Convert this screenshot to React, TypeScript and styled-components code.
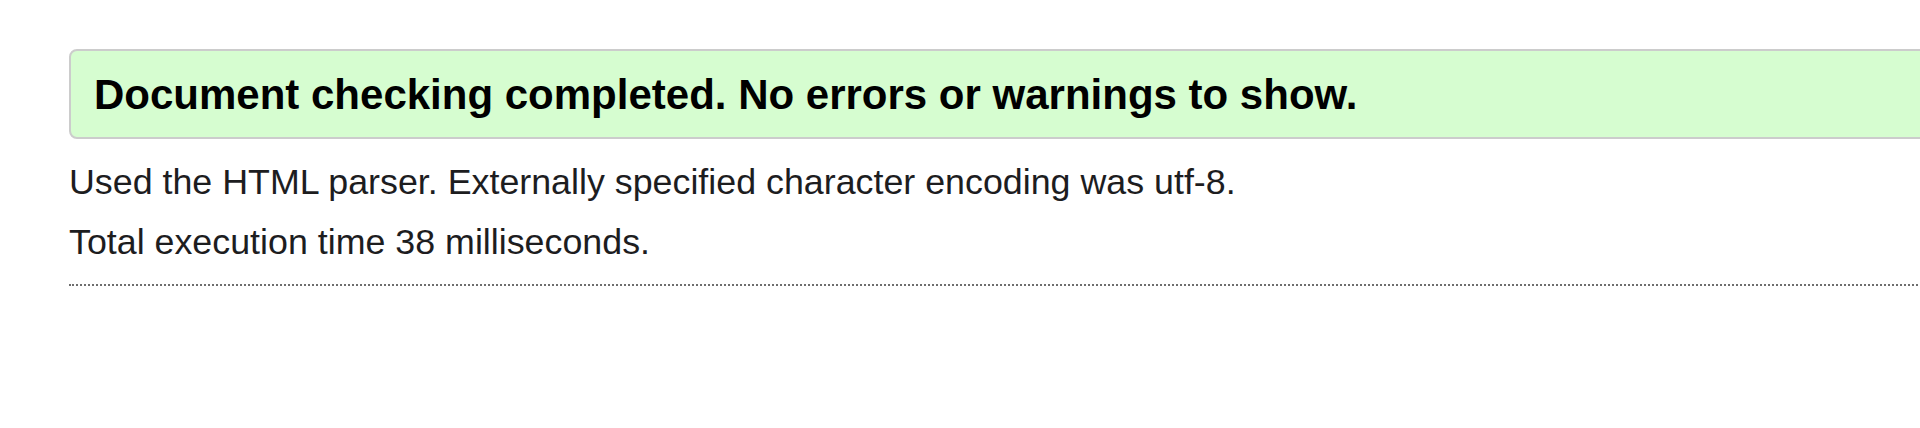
import React from "react";
import styled, { createGlobalStyle } from "styled-components";

const Global = createGlobalStyle`
  html, body {
    margin: 0;
    padding: 0;
    background: #ffffff;
    overflow: hidden;
  }
  body {
    font-family: "Liberation Sans", Arial, Helvetica, sans-serif;
  }
`;

const Page = styled.main`
  display: flex;
  flex-direction: column;
  padding: 49px 0 0 69px;
  width: 1900px;
`;

const SuccessBox = styled.p`
  margin: 0;
  box-sizing: border-box;
  height: 90px;
  display: flex;
  align-items: center;
  padding: 2px 23px 0;
  background: #d6fdd0;
  border: 2.5px solid #cccccc;
  border-radius: 8px;
  font-size: 42px;
  font-weight: 700;
  color: #000000;
`;

const Info = styled.p`
  margin: 0;
  font-size: 35.8px;
  line-height: 60px;
  color: #1d1d1f;
`;

const InfoGroup = styled.div`
  display: flex;
  flex-direction: column;
  padding-top: 13px;
`;

const Divider = styled.hr`
  margin: 12px 0 0 0;
  border: 0;
  border-top: 2px dotted #6e6e6e;
  height: 0;
`;

export default function App() {
  return (
    <>
      <Global />
      <Page>
        <SuccessBox>Document checking completed. No errors or warnings to show.</SuccessBox>
        <InfoGroup>
          <Info>Used the HTML parser. Externally specified character encoding was utf-8.</Info>
          <Info>Total execution time 38 milliseconds.</Info>
        </InfoGroup>
        <Divider />
      </Page>
    </>
  );
}
